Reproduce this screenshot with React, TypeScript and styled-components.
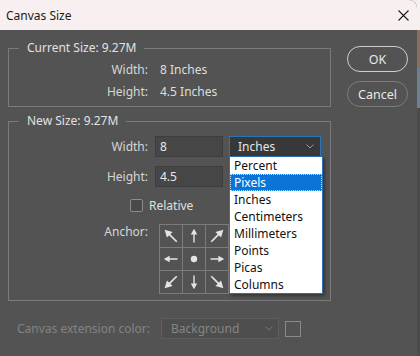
import React from 'react'
import styled, { createGlobalStyle } from 'styled-components'

const GlobalStyle = createGlobalStyle`
  html, body {
    margin: 0;
    padding: 0;
    background: #f4eded;
  }
  body {
    font-family: "Noto Sans", "DejaVu Sans", sans-serif;
  }
`

const Screen = styled.div`
  display: flex;
  width: 420px;
  height: 356px;
  overflow: hidden;
`

const Dialog = styled.div`
  width: 417px;
  height: 356px;
  display: flex;
  flex-direction: column;
  background: #535353;
  border-top-right-radius: 8px;
  overflow: hidden;
`

const EdgeStrip = styled.div`
  flex: 1;
  background: linear-gradient(#f6f0f0 0 30px, #8a6e62 30px 68px, #6d7f92 68px 108px, #4b4b4b 108px);
`

const TitleBar = styled.div`
  height: 30px;
  flex-shrink: 0;
  background: #f8eff0;
  display: flex;
  align-items: center;
  justify-content: space-between;
  padding: 0 8px 0 6px;
  font-size: 12px;
  color: #1b1b1b;
`

const Body = styled.div`
  display: flex;
  gap: 16px;
  padding: 10px 0 0 8px;
`

const LeftCol = styled.div`
  width: 323px;
  display: flex;
  flex-direction: column;
`

const RightCol = styled.div`
  display: flex;
  flex-direction: column;
  gap: 9px;
  padding-top: 6px;
`

const Group = styled.fieldset<{ $gapTop?: number; $padBottom: number }>`
  margin: ${(p) => p.$gapTop ?? 0}px 0 0;
  padding: 0 0 ${(p) => p.$padBottom}px;
  border: 1px solid #7a7a7a;
  min-width: 0;
`

const Legend = styled.legend`
  margin-left: 10px;
  padding: 0 8px;
  line-height: 16px;
  font-size: 12px;
  color: #e2e2e2;
`

const InfoGrid = styled.div`
  display: grid;
  grid-template-columns: 139px auto;
  column-gap: 12px;
  grid-auto-rows: 22px;
  align-items: center;
  padding-top: 2px;
  font-size: 12px;
`

const Label = styled.span<{ $muted?: boolean }>`
  text-align: right;
  color: ${(p) => (p.$muted ? '#8a8a8a' : '#d6d6d6')};
  font-size: 12px;
`

const Value = styled.span`
  color: #dedede;
`

const FormGrid = styled.div`
  display: grid;
  grid-template-columns: 139px auto;
  column-gap: 7px;
  margin-top: 7px;
  align-items: center;
`

const Row = styled.div<{ $mt?: number }>`
  display: contents;
  & > * {
    margin-top: ${(p) => p.$mt ?? 0}px;
  }
`

const Controls = styled.div`
  display: flex;
  gap: 6px;
  align-items: center;
  height: 21px;
`

const NumInput = styled.div`
  width: 68px;
  height: 21px;
  box-sizing: border-box;
  background: #464646;
  border: 1px solid #3e3e3e;
  color: #e8e8e8;
  font-size: 12px;
  line-height: 19px;
  padding-left: 4px;
`

const SelectWrap = styled.div`
  position: relative;
`

const UnitSelect = styled.div`
  width: 92px;
  height: 21px;
  box-sizing: border-box;
  background: #383838;
  border: 1px solid #2c74b8;
  color: #e6e6e6;
  font-size: 12px;
  line-height: 19px;
  padding: 0 6px 0 8px;
  display: flex;
  justify-content: space-between;
  align-items: center;
`

const Menu = styled.ul`
  position: absolute;
  top: 20px;
  left: 0;
  width: 94px;
  box-sizing: border-box;
  margin: 0;
  padding: 0;
  list-style: none;
  background: #ffffff;
  border: 1px solid #2e6fae;
  box-shadow: 2px 2px 3px rgba(0, 0, 0, 0.35);
  z-index: 2;
`

const MenuItem = styled.li<{ $active?: boolean }>`
  height: 17px;
  box-sizing: border-box;
  line-height: 15px;
  padding-left: 3px;
  font-size: 12px;
  color: ${(p) => (p.$active ? '#ffffff' : '#111111')};
  background: ${(p) => (p.$active ? '#0a74d8' : 'transparent')};
  border: 1px ${(p) => (p.$active ? 'dotted #c8e0f6' : 'solid transparent')};
`

const CheckRow = styled.div`
  grid-column: 1 / -1;
  display: flex;
  align-items: center;
  gap: 6px;
  height: 20px;
  margin-top: 8px;
  padding-left: 121px;
  font-size: 12px;
  color: #e0e0e0;
`

const CheckBox = styled.span`
  width: 13px;
  height: 13px;
  box-sizing: border-box;
  border: 1px solid #8c8c8c;
  border-radius: 2px;
  background: #4a4a4a;
`

const AnchorLabel = styled(Label)`
  align-self: start;
  line-height: 16px;
  margin-top: 9px;
`

const AnchorGrid = styled.div`
  display: grid;
  grid-template-columns: repeat(3, 22px);
  grid-template-rows: repeat(3, 22px);
  gap: 1px;
  padding: 1px;
  background: #7b7b7b;
  width: max-content;
  margin: 9px 0 0 4px;
`

const AnchorCell = styled.div`
  background: #535353;
  display: flex;
  align-items: center;
  justify-content: center;
`

const BottomRow = styled.div`
  display: grid;
  grid-template-columns: 147px auto auto;
  align-items: center;
  justify-content: start;
  column-gap: 6px;
  margin-top: 17px;
  height: 21px;
`

const BottomLabel = styled.span`
  padding-left: 9px;
  font-size: 12px;
  color: #838383;
`

const DisabledSelect = styled.div`
  width: 118px;
  height: 21px;
  box-sizing: border-box;
  background: #4e4e4e;
  border: 1px solid #5d5d5d;
  color: #858585;
  font-size: 12px;
  line-height: 19px;
  padding: 0 5px 0 9px;
  display: flex;
  justify-content: space-between;
  align-items: center;
`

const Swatch = styled.span`
  width: 16px;
  height: 16px;
  box-sizing: border-box;
  border: 1px solid #8a8a8a;
`

const PillButton = styled.div<{ $primary?: boolean }>`
  width: 61px;
  height: 26px;
  box-sizing: border-box;
  border-radius: 13px;
  border: ${(p) => (p.$primary ? '1.5px solid #cfcfcf' : '1px solid #7c7c7c')};
  color: #e8e8e8;
  font-size: 12.5px;
  display: flex;
  align-items: center;
  justify-content: center;
`

function Chevron({ color }: { color: string }) {
  return (
    <svg width="8" height="5" viewBox="0 0 8 5">
      <path d="M0.5 0.5 L4 4 L7.5 0.5" fill="none" stroke={color} strokeWidth="1" />
    </svg>
  )
}

function Arrow({ angle }: { angle: number }) {
  const diag = angle % 90 !== 0
  return (
    <svg width="22" height="22" viewBox="0 0 22 22">
      <g transform={`rotate(${angle} 11 11) ${diag ? 'translate(11 11) scale(1.25) translate(-11 -11)' : ''}`}>
        <line x1="11" y1="17.5" x2="11" y2="8" stroke="#e4e4e4" strokeWidth="1.4" />
        <polygon points="11,3.8 7.8,9.6 14.2,9.6" fill="#e4e4e4" />
      </g>
    </svg>
  )
}

const anchors: (number | null)[] = [-45, 0, 45, -90, null, 90, -135, 180, 135]
const units = ['Percent', 'Pixels', 'Inches', 'Centimeters', 'Millimeters', 'Points', 'Picas', 'Columns']

export default function App() {
  return (
    <Screen>
      <GlobalStyle />
      <Dialog>
        <TitleBar>
          <span>Canvas Size</span>
          <svg width="11" height="11" viewBox="0 0 11 11">
            <path d="M0.5 0.5 L10.5 10.5 M10.5 0.5 L0.5 10.5" stroke="#1b1b1b" strokeWidth="1.1" />
          </svg>
        </TitleBar>
        <Body>
          <LeftCol>
            <Group $padBottom={4}>
              <Legend>Current Size: 9.27M</Legend>
              <InfoGrid>
                <Label>Width:</Label>
                <Value>8 Inches</Value>
                <Label>Height:</Label>
                <Value>4.5 Inches</Value>
              </InfoGrid>
            </Group>
            <Group $gapTop={6} $padBottom={6}>
              <Legend>New Size: 9.27M</Legend>
              <FormGrid>
                <Label>Width:</Label>
                <Controls>
                  <NumInput>8</NumInput>
                  <SelectWrap>
                    <UnitSelect>
                      <span>Inches</span>
                      <Chevron color="#9a9a9a" />
                    </UnitSelect>
                    <Menu>
                      {units.map((u) => (
                        <MenuItem key={u} $active={u === 'Pixels'}>
                          {u}
                        </MenuItem>
                      ))}
                    </Menu>
                  </SelectWrap>
                </Controls>
                <Row $mt={9}>
                  <Label>Height:</Label>
                  <Controls>
                    <NumInput>4.5</NumInput>
                  </Controls>
                </Row>
                <CheckRow>
                  <CheckBox />
                  <span>Relative</span>
                </CheckRow>
                <AnchorLabel>Anchor:</AnchorLabel>
                <AnchorGrid>
                  {anchors.map((a, i) => (
                    <AnchorCell key={i}>
                      {a === null ? (
                        <svg width="8" height="8" viewBox="0 0 8 8">
                          <circle cx="4" cy="4" r="3.2" fill="#e4e4e4" />
                        </svg>
                      ) : (
                        <Arrow angle={a} />
                      )}
                    </AnchorCell>
                  ))}
                </AnchorGrid>
              </FormGrid>
            </Group>
            <BottomRow>
              <BottomLabel>Canvas extension color:</BottomLabel>
              <DisabledSelect>
                <span>Background</span>
                <Chevron color="#767676" />
              </DisabledSelect>
              <Swatch />
            </BottomRow>
          </LeftCol>
          <RightCol>
            <PillButton $primary>OK</PillButton>
            <PillButton>Cancel</PillButton>
          </RightCol>
        </Body>
      </Dialog>
      <EdgeStrip />
    </Screen>
  )
}
